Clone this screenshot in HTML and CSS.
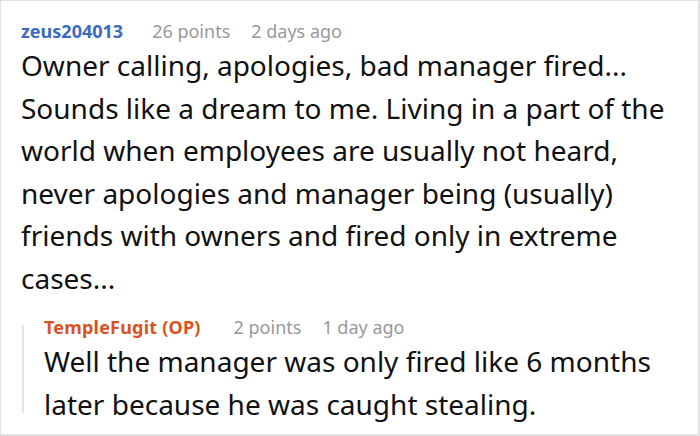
FILE: index.html
```html
<!DOCTYPE html>
<html>
<head>
<meta charset="utf-8">
<link rel="stylesheet" href="styles.css">
</head>
<body>
<div class="frame">
  <div class="comment">
    <div class="meta">
      <span class="author">zeus204013</span>
      <span class="info">26 points</span>
      <span class="info">2 days ago</span>
    </div>
    <p class="text">Owner calling, apologies, bad manager fired... Sounds like a dream to me. Living in a part of the world when employees are usually not heard, never apologies and manager being (usually) friends with owners and fired only in extreme cases...</p>
    <div class="reply">
      <div class="meta">
        <span class="author op">TempleFugit (OP)</span>
        <span class="info">2 points</span>
        <span class="info">1 day ago</span>
      </div>
      <p class="text">Well the manager was only fired like 6 months later because he was caught stealing.</p>
    </div>
  </div>
</div>
</body>
</html>
```
FILE: styles.css
```css
html, body { margin: 0; padding: 0; background: #fff; }
.frame {
  width: 700px;
  height: 436px;
  box-sizing: border-box;
  border: 1px solid #e2e2e2;
  border-right-width: 2px;
  border-bottom-width: 2px;
  overflow: hidden;
  font-family: "Noto Sans", "Open Sans", sans-serif;
}
.comment { padding: 17px 10px 0 20px; }
.meta { display: flex; gap: 21px; align-items: baseline; font-size: 18px; line-height: 26px; }
.author { font-weight: 700; color: #3a6bbf; margin-right: 8px; }
.author.op { color: #d9521f; margin-right: 12px; letter-spacing: 0.2px; }
.info { color: #999; }
.text { margin: 0; font-size: 28px; line-height: 42.5px; color: #111; }
.reply {
  margin-top: 15px;
  margin-left: 1px;
  padding-left: 22px;
  background: linear-gradient(#e4e4e4, #e4e4e4) no-repeat 0 11px / 2px calc(100% - 23px);
}
```
